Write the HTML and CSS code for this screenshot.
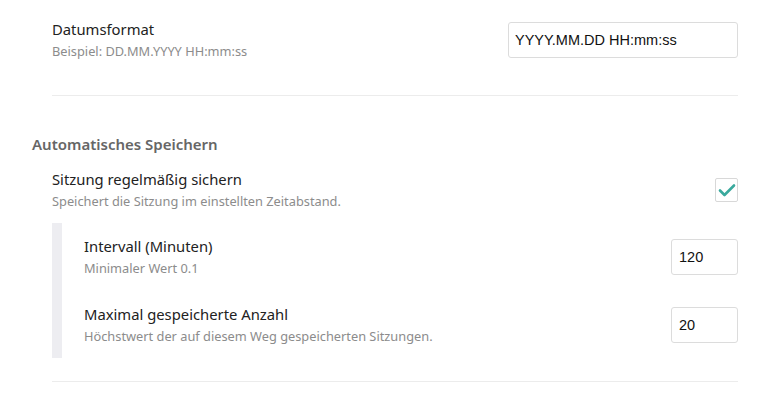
FILE: index.html
```html
<!DOCTYPE html>
<html lang="de">
<head>
<meta charset="utf-8">
<link rel="stylesheet" href="styles.css">
</head>
<body>
<div class="page">
  <div class="setting first">
    <div class="label">
      <div class="title">Datumsformat</div>
      <div class="desc">Beispiel: DD.MM.YYYY HH:mm:ss</div>
    </div>
    <input class="text wide" type="text" value="YYYY.MM.DD HH:mm:ss">
  </div>
  <div class="divider"></div>

  <div class="section-title">Automatisches Speichern</div>
  <div class="setting">
    <div class="label">
      <div class="title">Sitzung regelmäßig sichern</div>
      <div class="desc">Speichert die Sitzung im einstellten Zeitabstand.</div>
    </div>
    <div class="checkbox">
      <svg width="18" height="14" viewBox="0 0 18 14"><path d="M2 7.5 L6.5 12 L16 2.5" fill="none" stroke="#3aa99d" stroke-width="2.6" stroke-linecap="round" stroke-linejoin="round"/></svg>
    </div>
  </div>
  <div class="group">
    <div class="setting sub">
      <div class="label">
        <div class="title">Intervall (Minuten)</div>
        <div class="desc">Minimaler Wert 0.1</div>
      </div>
      <input class="text small" type="text" value="120">
    </div>
    <div class="setting sub">
      <div class="label">
        <div class="title">Maximal gespeicherte Anzahl</div>
        <div class="desc">Höchstwert der auf diesem Weg gespeicherten Sitzungen.</div>
      </div>
      <input class="text small" type="text" value="20">
    </div>
  </div>
  <div class="divider bottom"></div>
</div>
</body>
</html>
```
FILE: styles.css
```css
html, body {
  margin: 0;
  padding: 0;
  background: #fff;
}
body {
  font-family: "Noto Sans", "Open Sans", sans-serif;
  color: #222;
}
.page {
  padding: 0 46px 0 32px;
}
.setting {
  display: flex;
  justify-content: space-between;
  align-items: center;
  margin-left: 20px;
}
.setting.first {
  padding-top: 19px;
  padding-bottom: 35px;
}
.label {
  display: flex;
  flex-direction: column;
}
.title {
  font-size: 14.8px;
  line-height: 20px;
  margin-bottom: 3px;
  color: #222;
}
.desc {
  font-size: 12.8px;
  line-height: 18px;
  color: #8c8c8c;
}
.text {
  box-sizing: border-box;
  height: 36px;
  border: 1px solid #dcdcdc;
  border-radius: 3px;
  padding: 0 6px;
  font-family: "Liberation Sans", Arial, sans-serif;
  font-size: 14.5px;
  color: #111;
  background: #fff;
  outline: none;
}
.text.wide { width: 230px; }
.text.small { width: 67px; padding: 0 7px; }
.divider {
  margin-left: 20px;
  border-top: 1px solid #ececec;
}
.section-title {
  margin-top: 38px;
  font-size: 15px;
  line-height: 20px;
  font-weight: 600;
  color: #666;
  margin-bottom: 15px;
}
.checkbox {
  box-sizing: border-box;
  width: 23px;
  height: 24px;
  border: 1px solid #d8d8d8;
  border-radius: 2px;
  display: flex;
  align-items: center;
  justify-content: center;
}
.group {
  margin-left: 20px;
  margin-top: 13px;
  border-left: 10px solid #ededf1;
  padding: 13px 0 13px 22px;
  display: flex;
  flex-direction: column;
  gap: 27px;
}
.setting.sub {
  margin-left: 0;
}
.divider.bottom {
  margin-top: 23px;
}
```
